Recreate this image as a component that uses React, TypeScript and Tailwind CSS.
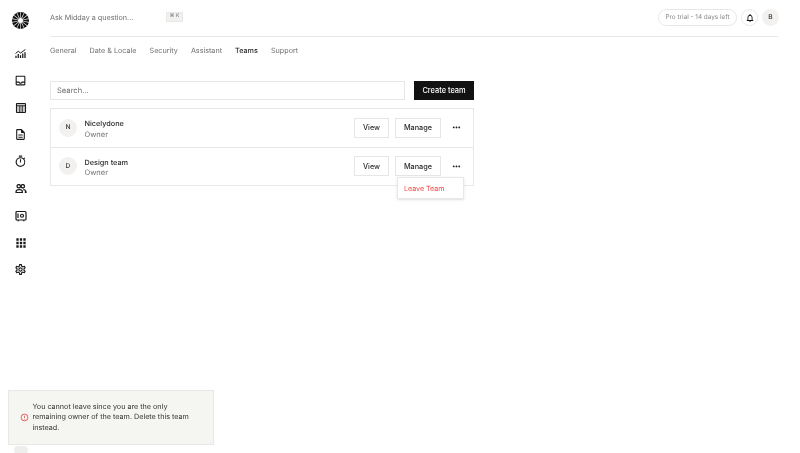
import React from "react";
import { MdOutlineInbox, MdOutlineDescription, MdOutlineTimer, MdApps, MdOutlineSettings, MdOutlineNotifications, MdMoreHoriz, MdOutlineErrorOutline } from "react-icons/md";

const Chart = () => (
  <svg width="11" height="9" viewBox="0 0 24 20" fill="none" stroke="#1a1a1a">
    <path d="M1 10L7 5l5 4L23 1" strokeWidth="2.2" />
    <path d="M2 20v-5M7 20v-9M12 20v-6M17 20v-10M22 20v-13" strokeWidth="2.8" />
  </svg>
);
const TableIcon = () => (
  <svg width="12" height="12" viewBox="0 0 24 24" fill="none" stroke="#1a1a1a" strokeWidth="2.2">
    <rect x="3" y="3" width="18" height="18" rx="1" fill="#c9c9c9" />
    <path d="M3 7.5h18M9.5 8v13M14.5 8v13" strokeWidth="1.8" />
  </svg>
);
const People = () => (
  <svg width="12" height="9" viewBox="0 0 26 20" fill="none" stroke="#1a1a1a" strokeWidth="2.8">
    <circle cx="8" cy="5" r="3.8" />
    <circle cx="17" cy="5" r="3.8" />
    <path d="M2 19v-2c0-3 3-4.5 7-4.5s7 1.5 7 4.5v2H2z" />
    <path d="M18 12.5c3 0 5 1 5.5 3" />
    <circle cx="23.5" cy="18" r="2.4" fill="#1a1a1a" stroke="none" />
  </svg>
);
const Safe = () => (
  <svg width="12" height="12" viewBox="0 0 24 24" fill="none" stroke="#1a1a1a" strokeWidth="2.4">
    <rect x="2" y="3" width="20" height="17" rx="2" />
    <circle cx="14" cy="11.5" r="3" />
    <path d="M5 21.5h3M16 21.5h3M6 7v9" />
  </svg>
);
const Logo = () => {
  const rays = Array.from({ length: 14 }, (_, i) => (i * 360) / 14);
  return (
    <svg width="17" height="17" viewBox="0 0 34 34">
      <circle cx="17" cy="17" r="17" fill="#111" />
      {rays.map((a) => (
        <rect key={a} x="16.4" y="0" width="1.2" height="12" fill="#fff" transform={`rotate(${a} 17 17)`} />
      ))}
      <circle cx="17" cy="17" r="5" fill="#fff" />
    </svg>
  );
};

const nav = [
  <Chart />,
  <MdOutlineInbox size={13} color="#1a1a1a" />,
  <TableIcon />,
  <MdOutlineDescription size={13} color="#1a1a1a" />,
  <MdOutlineTimer size={13} color="#1a1a1a" />,
  <People />,
  <Safe />,
  <MdApps size={14} color="#1a1a1a" />,
  <MdOutlineSettings size={13} color="#1a1a1a" />,
];

const tabs = ["General", "Date & Locale", "Security", "Assistant", "Teams", "Support"];

const Team = ({ letter, name, border }: { letter: string; name: string; border?: boolean }) => (
  <div className={`flex items-center pl-[8px] pr-[2px] ${border ? "h-[38.5px] border-b border-[#e8e8e6]" : "h-[37.5px]"}`}>
    <div className="w-[18px] h-[18px] pt-[1px] rounded-full bg-[#f2f1ef] flex items-center justify-center text-[6.6px] font-medium text-[#333]">{letter}</div>
    <div className="ml-[7.5px] pt-[3.5px] flex flex-col leading-[10.5px]">
      <span className="text-[7.3px] font-medium text-[#2a2a2a]">{name}</span>
      <span className="text-[7.5px] text-[#707070]">Owner</span>
    </div>
    <div className="ml-auto flex items-center">
      <button className="h-[20px] w-[35px] pt-[2px] border border-[#e6e6e4] text-[7.2px] font-medium text-[#2a2a2a]">View</button>
      <button className="ml-[6px] h-[20px] w-[46px] pt-[2px] border border-[#e6e6e4] text-[7.3px] font-medium text-[#2a2a2a]">Manage</button>
      <span className="w-[30px] flex justify-center"><MdMoreHoriz size={11} color="#222" /></span>
    </div>
  </div>
);

export default function App() {
  return (
    <div className="relative w-[800px] h-[453px] overflow-hidden flex antialiased will-change-transform [text-rendering:geometricPrecision]" style={{ fontFamily: "Inter, sans-serif" }}>
      <aside className="w-[50px] h-full flex flex-col items-center pr-[9px]">
        <div className="mt-[12px] h-[17px] flex items-center justify-center"><Logo /></div>
        <div className="mt-[11px] flex flex-col items-center">
          {nav.map((n, i) => (
            <div key={i} className="h-[27px] w-[20px] flex items-center justify-center">{n}</div>
          ))}
        </div>
        <div className="mt-auto h-[8px] w-[14px] rounded-full bg-[#eeeeec] translate-y-[1px]" />
      </aside>
      <main className="flex-1 pr-[22px] flex flex-col">
        <header className="h-[37px] shrink-0 border-b border-[#e8e8e6] flex items-center">
          <span className="text-[7.2px] text-[#707070] w-[116px]">Ask Midday a question...</span>
          <span className="mt-[-2px] h-[10px] w-[17px] bg-[#f2f1ef] border border-[#e8e8e6] text-[5px] text-[#707070] flex items-center justify-center">⌘ K</span>
          <div className="ml-auto -mr-[1px] -mt-[1px] flex items-center">
            <span className="h-[17px] w-[79px] rounded-full border border-[#e6e6e4] text-[6.4px] text-[#8a8a8a] flex items-center justify-center whitespace-nowrap">Pro trial - 14 days left</span>
            <span className="ml-[4px] w-[17px] h-[17px] rounded-full border border-[#e6e6e4] flex items-center justify-center"><MdOutlineNotifications size={10} color="#111" /></span>
            <span className="ml-[4px] w-[17px] h-[17px] rounded-full bg-[#f2f1ef] flex items-center justify-center text-[6.6px] font-medium text-[#333]">B</span>
          </div>
        </header>
        <nav className="flex gap-[13.1px] mt-[9px] h-[11px] items-center">
          {tabs.map((t) => (
            <span key={t} className={`text-[7.2px] ${t === "Teams" ? "font-medium text-[#2a2a2a]" : "text-[#707070]"}`}>{t}</span>
          ))}
        </nav>
        <section className="w-[424px] mt-[24px]">
          <div className="flex justify-between">
            <div className="w-[355px] h-[19px] border border-[#e6e6e4] flex items-center px-[6px] text-[7.6px] text-[#707070]">Search...</div>
            <button className="w-[60px] h-[19px] bg-[#121212] text-white text-[7.4px] font-medium">Create team</button>
          </div>
          <div className="mt-[8px] border border-[#e8e8e6]">
            <Team letter="N" name="Nicelydone" border />
            <Team letter="D" name="Design team" />
          </div>
        </section>
      </main>
      <div className="absolute left-[397px] top-[177px] w-[67px] h-[22px] pt-[2px] bg-white border border-[#e8e8e6] shadow-sm flex items-center pl-[6px] text-[7.1px] text-[#f04a4a]">Leave Team</div>
      <div className="absolute left-[8px] top-[390px] w-[206px] h-[55px] bg-[#f5f5f2] border border-[#e8e8e6] flex items-center pl-[10.5px]">
        <MdOutlineErrorOutline size={9} color="#e24a4a" />
        <p className="ml-[4px] w-[170px] text-[7.2px] leading-[10.5px] text-[#333]">You cannot leave since you are the only remaining owner of the team. Delete this team instead.</p>
      </div>
    </div>
  );
}
